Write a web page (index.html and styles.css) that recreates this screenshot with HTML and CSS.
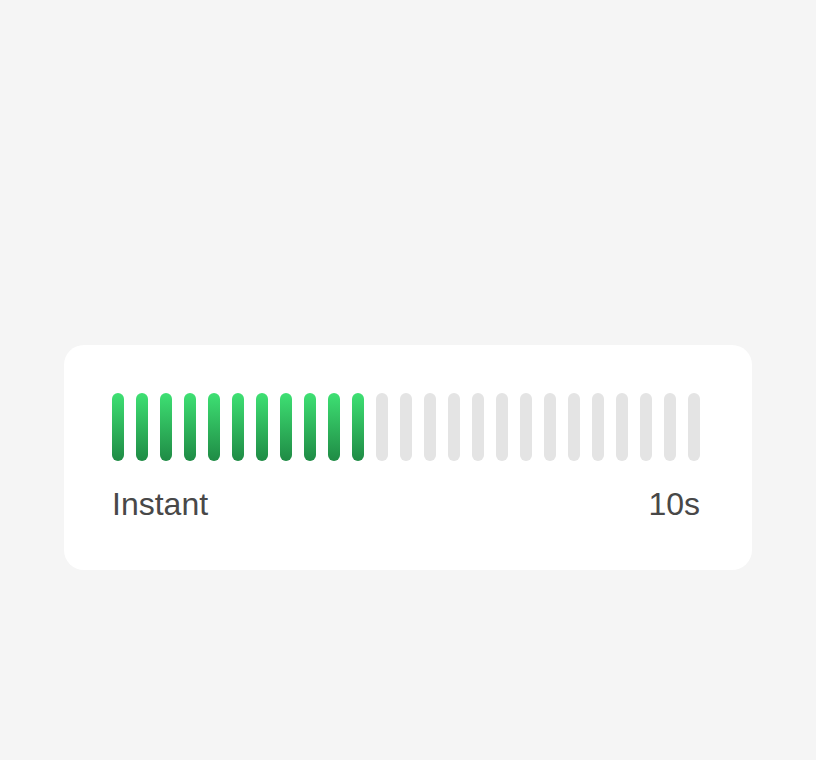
FILE: index.html
```html
<!DOCTYPE html>
<html lang="en">
<head>
    <meta charset="UTF-8">
    <meta name="viewport" content="width=device-width, initial-scale=1.0">
    <title>Delay</title>
    <link rel="stylesheet" href="styles.css">
</head>
<body>
    <div class="delay-card">
        <div class="bars">
            <span class="bar on"></span>
            <span class="bar on"></span>
            <span class="bar on"></span>
            <span class="bar on"></span>
            <span class="bar on"></span>
            <span class="bar on"></span>
            <span class="bar on"></span>
            <span class="bar on"></span>
            <span class="bar on"></span>
            <span class="bar on"></span>
            <span class="bar on"></span>
            <span class="bar"></span>
            <span class="bar"></span>
            <span class="bar"></span>
            <span class="bar"></span>
            <span class="bar"></span>
            <span class="bar"></span>
            <span class="bar"></span>
            <span class="bar"></span>
            <span class="bar"></span>
            <span class="bar"></span>
            <span class="bar"></span>
            <span class="bar"></span>
            <span class="bar"></span>
            <span class="bar"></span>
        </div>
        <div class="labels">
            <span>Instant</span>
            <span>10s</span>
        </div>
    </div>
</body>
</html>
```

FILE: styles.css
```css
* {
    margin: 0;
    padding: 0;
    box-sizing: border-box;
}

body {
    background-color: #f5f5f5;
    font-family: "Liberation Sans", Arial, sans-serif;
    padding: 345px 64px 0 64px;
}

.delay-card {
    background-color: #ffffff;
    border-radius: 20px;
    width: 688px;
    padding: 48px 52px 50px 48px;
}

.bars {
    display: flex;
    gap: 12px;
}

.bar {
    width: 12px;
    height: 68px;
    border-radius: 6px;
    background-color: #e4e4e4;
}

.bar.on {
    background: linear-gradient(to bottom, #3ee073, #1f8b45);
}

.labels {
    display: flex;
    justify-content: space-between;
    margin-top: 27px;
    font-size: 32px;
    line-height: 32px;
    color: #484848;
}
```
